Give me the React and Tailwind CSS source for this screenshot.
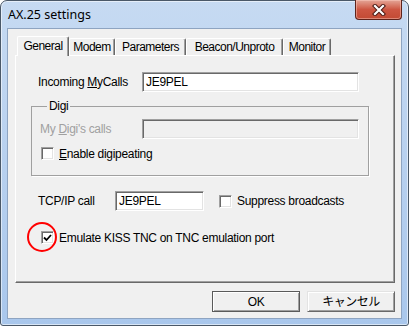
import React from 'react';

const font = { fontFamily: '"Liberation Sans", "Noto Sans CJK JP", sans-serif' };

function CheckBox({ checked }) {
  return (
    <span className="w-[13px] h-[13px] shrink-0 flex items-center justify-center bg-white border border-t-[#a0a0a0] border-l-[#a0a0a0] border-b-white border-r-white shadow-[inset_1px_1px_0_#696969,inset_-1px_-1px_0_#e3e3e3]">
      {checked && (
        <svg width="9" height="9" viewBox="0 0 9 9">
          <path d="M1 4.5 L3.5 7 L8 2" fill="none" stroke="#000" strokeWidth="1.8" />
        </svg>
      )}
    </span>
  );
}

function TextBox({ value, width, disabled }) {
  return (
    <div
      className={`h-[20px] flex items-center pl-[3px] border border-t-[#a0a0a0] border-l-[#a0a0a0] border-b-white border-r-white shadow-[inset_1px_1px_0_#696969,inset_-1px_-1px_0_#e3e3e3] ${
        disabled ? 'bg-[#f0f0f0]' : 'bg-white'
      } ${width}`}
    >
      {value}
    </div>
  );
}

function Tab({ label, width, selected }) {
  if (selected) {
    return (
      <div
        className={`relative z-10 h-[20px] -mb-px flex justify-center pt-[2px] bg-[#f0f0f0] border-l border-t border-r border-l-white border-t-white border-r-[#696969] rounded-t-[2px] shadow-[inset_-1px_0_0_#a0a0a0] ${width}`}
      >
        {label}
      </div>
    );
  }
  return (
    <div
      className={`h-[17px] flex items-center justify-center bg-[#f0f0f0] border-l border-t border-r border-l-white border-t-white border-r-[#696969] rounded-t-[2px] shadow-[inset_-1px_0_0_#a0a0a0] ${width}`}
    >
      {label}
    </div>
  );
}

export default function App() {
  return (
    <div
      className="w-[409px] h-[326px] flex flex-col px-[6px] pb-[6px] border border-[#4a5868] rounded-t-[7px] rounded-b-[3px] bg-linear-to-b from-[#c6daf2] to-[#a9c7ec] shadow-[inset_0_0_0_1px_rgba(255,255,255,0.55)]"
      style={font}
    >
      {/* title bar */}
      <div className="h-[27px] shrink-0 flex items-start">
        <div
          className="pl-[1px] pt-[6px] text-[12.5px] leading-[16px] text-black"
          style={{ fontFamily: '"Noto Sans", sans-serif' }}
        >
          AX.25 settings
        </div>
        <div className="ml-auto -mt-px w-[47px] h-[20px] flex items-center justify-center rounded-b-[4px] border border-t-0 border-[#5e231b] bg-linear-to-b from-[#e3a597] via-[#cd5642] to-[#c24a34] shadow-[inset_0_0_0_1px_rgba(255,210,200,0.45)]">
          <svg width="14" height="12" viewBox="0 0 14 12">
            <path d="M3 2 L11 10 M11 2 L3 10" stroke="#4b1a14" strokeWidth="4.2" strokeLinecap="square" />
            <path d="M3 2 L11 10 M11 2 L3 10" stroke="#ffffff" strokeWidth="2.2" strokeLinecap="square" />
          </svg>
        </div>
      </div>

      {/* client area */}
      <div className="flex-1 flex flex-col bg-[#f0f0f0] border border-[#8ea4c1] pt-[7px] text-[12px] tracking-[-0.3px] text-black leading-[14px]">
        <div className="ml-[7px] w-[380px] flex flex-col">
          {/* tabs */}
          <div className="h-[19px] flex items-end pl-[2px] tracking-[-0.5px]">
            <Tab label="General" width="w-[52px]" selected />
            <Tab label="Modem" width="w-[46px]" />
            <Tab label="Parameters" width="w-[71px]" />
            <Tab label="Beacon/Unproto" width="w-[97px]" />
            <Tab label="Monitor" width="w-[48px]" />
          </div>

          {/* tab panel */}
          <div className="h-[228px] flex flex-col pt-[16px] border border-l-white border-t-white border-r-[#696969] border-b-[#696969] shadow-[inset_-1px_-1px_0_#a0a0a0]">
            <div className="h-[20px] flex items-center pl-[22px]">
              <span className="w-[104px]">
                Incoming <u>M</u>yCalls
              </span>
              <TextBox value="JE9PEL" width="w-[217px]" />
            </div>

            <fieldset className="mt-[7px] ml-[15px] w-[338px] border border-[#a0a0a0] shadow-[1px_1px_0_#ffffff] pl-[8px] pb-[15px] flex flex-col">
              <legend className="ml-[7px] px-[2px] leading-[14px]">Digi</legend>
              <div className="mt-[6px] h-[20px] flex items-center">
                <span className="w-[102px] text-[#a0a0a0]">
                  My <u>D</u>igi's calls
                </span>
                <TextBox value="" width="w-[217px]" disabled />
              </div>
              <div className="mt-[8px] h-[13px] flex items-center gap-[5px] pl-[1px]">
                <CheckBox />
                <span>
                  <u>E</u>nable digipeating
                </span>
              </div>
            </fieldset>

            <div className="mt-[15px] h-[20px] flex items-center pl-[22px]">
              <span className="w-[77px]">TCP/IP call</span>
              <TextBox value="JE9PEL" width="w-[89px]" />
              <span className="ml-[15px]">
                <CheckBox />
              </span>
              <span className="ml-[5px]">Suppress broadcasts</span>
            </div>

            <div className="mt-[20px] h-[13px] flex items-center gap-[5px] pl-[25px]">
              <span className="relative">
                <CheckBox checked />
                <span className="absolute -left-[14px] -top-[9px] w-[30px] h-[30px] rounded-full border-2 border-[#ff0000]" />
              </span>
              <span>Emulate KISS TNC on TNC emulation port</span>
            </div>
          </div>

          {/* buttons */}
          <div className="mt-[8px] flex justify-end gap-[7px]">
            <button className="w-[88px] h-[21px] flex items-center justify-center bg-[#f0f0f0] border border-[#5a5a5a] shadow-[inset_1px_1px_0_#ffffff,inset_-1px_-1px_0_#a0a0a0]">
              OK
            </button>
            <button className="w-[88px] h-[21px] flex items-center justify-center bg-[#f0f0f0] border border-t-[#e3e3e3] border-l-[#e3e3e3] border-b-[#696969] border-r-[#696969] shadow-[inset_1px_1px_0_#ffffff,inset_-1px_-1px_0_#a0a0a0] tracking-[-0.5px]">
              キャンセル
            </button>
          </div>
        </div>
      </div>
    </div>
  );
}
